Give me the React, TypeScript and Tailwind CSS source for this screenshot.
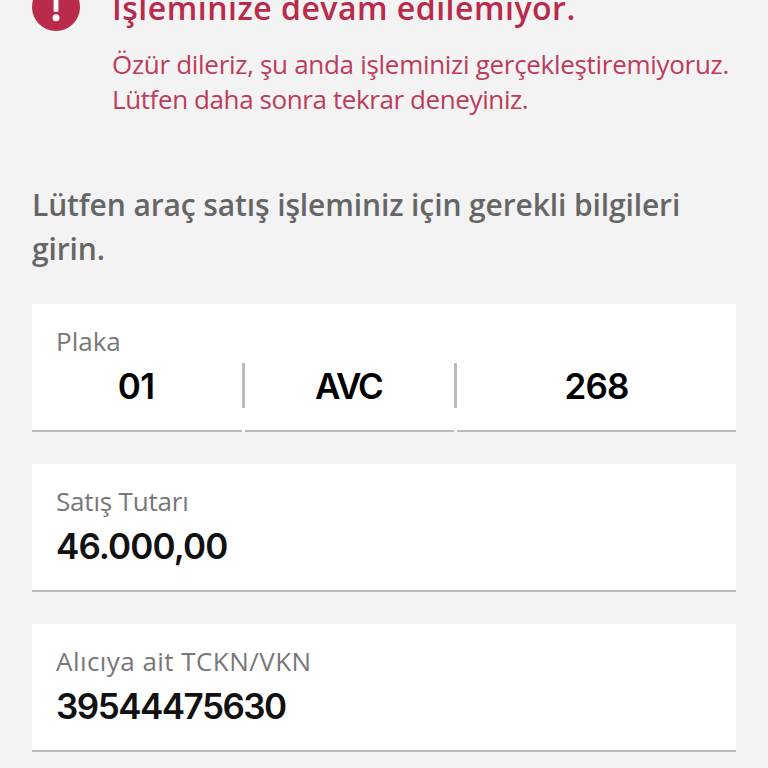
import React from "react";

const plate = [
  { value: "01", className: "w-[210px] pr-0.5 tracking-[-0.6px]" },
  { value: "AVC", className: "w-[209px] pr-0.5 tracking-[-2px]" },
  { value: "268", className: "w-[279px] tracking-[-0.9px]" },
];

const fields = [
  {
    label: "Satış Tutarı",
    labelClass: "tracking-[-0.18px]",
    value: "46.000,00",
    valueClass: "tracking-[-0.9px]",
  },
  {
    label: "Alıcıya ait TCKN/VKN",
    labelClass: "tracking-[0.45px]",
    value: "39544475630",
    valueClass: "tracking-[-1.5px]",
  },
];

type LabelProps = {
  className?: string;
  children: React.ReactNode;
};

const Label = ({ className = "", children }: LabelProps) => (
  <p
    className={`px-6 pt-[19px] pb-px text-[26px] leading-9 text-[#777] ${className}`}
  >
    {children}
  </p>
);

const App = () => {
  return (
    <main className="h-screen overflow-hidden bg-[#f3f3f3] px-8 font-['Open_Sans',sans-serif]">
      <section className="flex gap-8 text-[#b92a4b]">
        <svg
          className="-mt-[17px] h-12 w-12 shrink-0"
          viewBox="0 0 48 48"
          fill="none"
        >
          <circle cx="24" cy="24" r="24" fill="#b92a4b" />
          <path d="M24 10v18.7" stroke="#fff" strokeWidth="4.8" />
          <circle cx="24" cy="34.8" r="3.5" fill="#fff" />
        </svg>
        <div className="whitespace-nowrap">
          <h1 className="-mt-[14px] text-[32px] leading-[44px] font-semibold tracking-[0.5px]">
            İşleminize devam edilemiyor.
          </h1>
          <p className="mt-[17px] text-[26px] leading-[35px] tracking-[-0.3px] text-[#be3b59]">
            Özür dileriz, şu anda işleminizi gerçekleştiremiyoruz.
            <br />
            <span className="tracking-[-0.4px]">
              Lütfen daha sonra tekrar deneyiniz.
            </span>
          </p>
        </div>
      </section>

      <h2 className="mt-[66px] text-[30px] leading-[44px] font-semibold tracking-[-0.12px] text-[#666]">
        Lütfen araç satış işleminiz için gerekli bilgileri girin.
      </h2>

      <div className="mt-[33px] h-32 bg-white">
        <Label>Plaka</Label>
        <div className="flex h-[72px] justify-between">
          {plate.map((part, i) => (
            <React.Fragment key={part.value}>
              {i > 0 && <span className="mt-[3px] h-[45px] w-[3px] bg-[#bbb]" />}
              <div
                className={`${part.className} border-b-2 border-[#bbb] pt-1 text-center font-[Inter,sans-serif] text-[35px] leading-[44px] font-semibold text-black`}
              >
                {part.value}
              </div>
            </React.Fragment>
          ))}
        </div>
      </div>

      {fields.map((field) => (
        <div
          key={field.label}
          className="mt-8 h-32 border-b-2 border-[#bbb] bg-white"
        >
          <Label className={field.labelClass}>{field.label}</Label>
          <p
            className={`px-6 pt-1 font-[Inter,sans-serif] text-[35px] leading-[44px] font-semibold text-[#111] ${field.valueClass}`}
          >
            {field.value}
          </p>
        </div>
      ))}
    </main>
  );
};

export default App;
